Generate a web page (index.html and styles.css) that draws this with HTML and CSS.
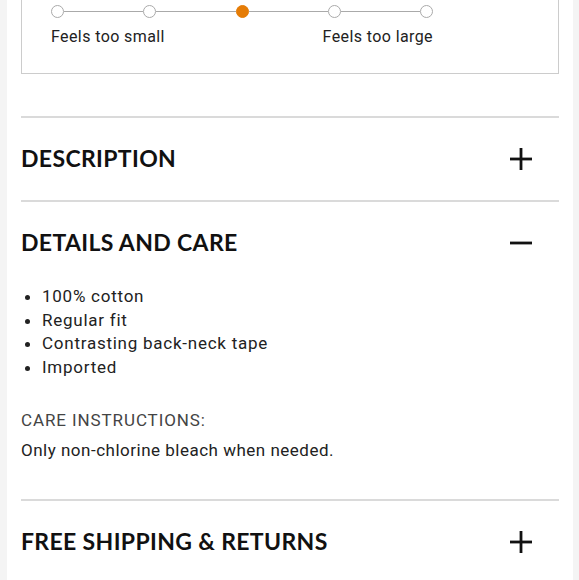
FILE: index.html
```html
<!DOCTYPE html>
<html lang="en">
<head>
    <meta charset="UTF-8">
    <meta name="viewport" content="width=device-width, initial-scale=1.0">
    <title>Product details</title>
    <link rel="stylesheet" href="styles.css">
</head>
<body>
    <div class="page">
        <div class="fit-box">
            <div class="fit-scale">
                <span class="dot"></span>
                <span class="dash"></span>
                <span class="dot"></span>
                <span class="dash"></span>
                <span class="dot active"></span>
                <span class="dash"></span>
                <span class="dot"></span>
                <span class="dash"></span>
                <span class="dot"></span>
            </div>
            <div class="fit-labels">
                <span>Feels too small</span>
                <span>Feels too large</span>
            </div>
        </div>

        <div class="accordion">
            <div class="acc-item">
                <div class="acc-head">
                    <h2>DESCRIPTION</h2>
                    <svg class="acc-icon" width="22" height="22" viewBox="0 0 22 22">
                        <line x1="0" y1="11" x2="22" y2="11" />
                        <line x1="11" y1="0" x2="11" y2="22" />
                    </svg>
                </div>
            </div>

            <div class="acc-item open">
                <div class="acc-head">
                    <h2>DETAILS AND CARE</h2>
                    <svg class="acc-icon" width="22" height="22" viewBox="0 0 22 22">
                        <line x1="0" y1="11" x2="22" y2="11" />
                    </svg>
                </div>
                <div class="acc-body">
                    <ul class="features">
                        <li>100% cotton</li>
                        <li>Regular fit</li>
                        <li>Contrasting back-neck tape</li>
                        <li>Imported</li>
                    </ul>
                    <p class="care-title">CARE INSTRUCTIONS:</p>
                    <p class="care-text">Only non-chlorine bleach when needed.</p>
                </div>
            </div>

            <div class="acc-item">
                <div class="acc-head">
                    <h2>FREE SHIPPING &amp; RETURNS</h2>
                    <svg class="acc-icon" width="22" height="22" viewBox="0 0 22 22">
                        <line x1="0" y1="11" x2="22" y2="11" />
                        <line x1="11" y1="0" x2="11" y2="22" />
                    </svg>
                </div>
            </div>
        </div>
    </div>
</body>
</html>
```

FILE: styles.css
```css
body {
    margin: 0;
    background-color: #f4f4f4;
    font-family: Roboto, "Liberation Sans", sans-serif;
    color: #222;
}

.page {
    background-color: #fff;
    margin: 0 6px 0 7px;
    padding: 0 14px 40px;
    overflow: hidden;
}

.fit-box {
    margin-top: -30px;
    padding: 34px 29px 26px;
    border: 1px solid #ccc;
}

.fit-scale {
    display: flex;
    align-items: center;
    width: 382px;
}

.dot {
    width: 11px;
    height: 11px;
    border: 1.5px solid #aaa;
    border-radius: 50%;
    background-color: #fff;
    flex-shrink: 0;
}

.dot.active {
    background-color: #e57c06;
    border-color: #e57c06;
}

.dash {
    flex: 1;
    height: 1.5px;
    background-color: #aaa;
}

.fit-labels {
    display: flex;
    justify-content: space-between;
    width: 382px;
    margin-top: 9px;
    font-size: 16px;
    line-height: 20px;
    letter-spacing: 0.4px;
}

.accordion {
    margin-top: 42px;
}

.acc-item {
    border-top: 2px solid #dadada;
}

.acc-head {
    display: flex;
    align-items: center;
    justify-content: space-between;
    height: 82px;
    padding-right: 27px;
}

.acc-head h2 {
    margin: 0 0 3px;
    font-family: Lato, "Liberation Sans", sans-serif;
    font-weight: 700;
    font-size: 23px;
    letter-spacing: 0.35px;
    color: #111;
}

.acc-icon {
    margin-bottom: 1px;
}

.acc-icon line {
    stroke: #111;
    stroke-width: 2.8;
}

.acc-body {
    padding: 1px 0 37px;
}

.features {
    margin: 0;
    padding-left: 21px;
    font-size: 17px;
    line-height: 23.5px;
    letter-spacing: 0.75px;
}

.care-title {
    margin: 30px 0 6px;
    font-size: 17px;
    line-height: 23.5px;
    letter-spacing: 0.9px;
    color: #444;
}

.care-text {
    margin: 0;
    font-size: 17px;
    line-height: 23.5px;
    letter-spacing: 0.5px;
}
```
